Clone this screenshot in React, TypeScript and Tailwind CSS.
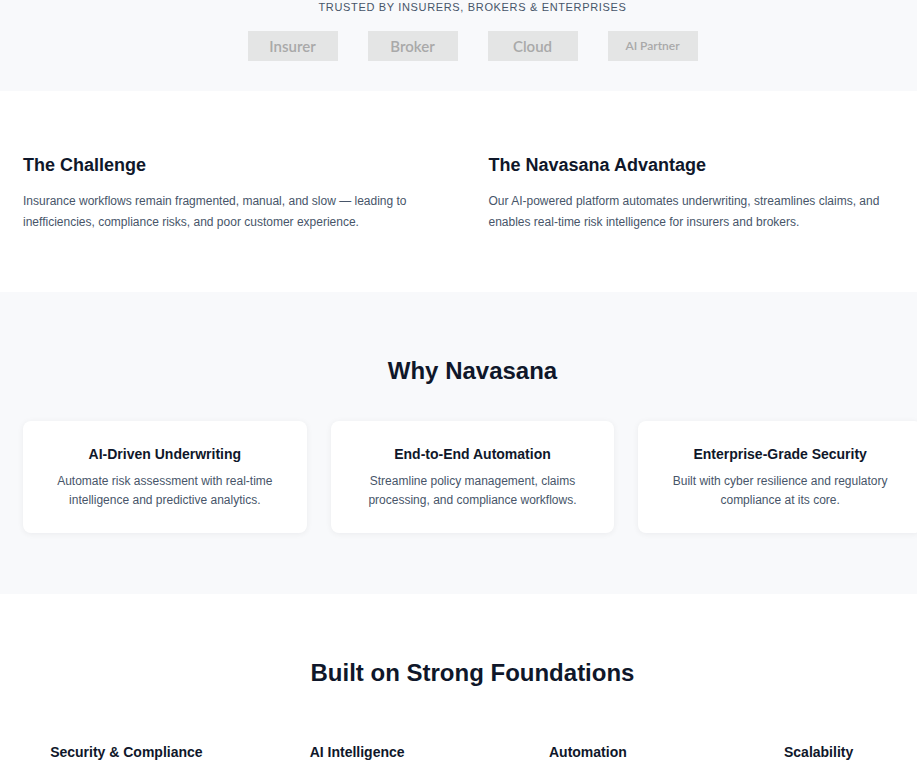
const LOGOS = [
  { name: 'Insurer', size: 'text-[15px]' },
  { name: 'Broker', size: 'text-[15px]' },
  { name: 'Cloud', size: 'text-[15px]' },
  { name: 'AI Partner', size: 'text-[12px]' }];

const WHY = [
  {
    title: 'AI-Driven Underwriting',
    body: 'Automate risk assessment with real-time intelligence and predictive analytics.'
  },
  {
    title: 'End-to-End Automation',
    body: 'Streamline policy management, claims processing, and compliance workflows.'
  },
  {
    title: 'Enterprise-Grade Security',
    body: 'Built with cyber resilience and regulatory compliance at its core.'
  }];

const PILLARS = ['Security & Compliance', 'AI Intelligence', 'Automation', 'Scalability'];

export default function App() {
  return (
    <div className="w-[945px] bg-white font-['Liberation_Sans',Arial,sans-serif] text-[#0f172a]">
      {/* trusted by */}
      <section className="bg-[#f8f9fb] pb-[30px]">
        <div className="flex flex-col items-center">
          <p className="text-[11px] leading-[14px] tracking-[0.06em] text-[#475569] uppercase">
            Trusted by insurers, brokers &amp; enterprises
          </p>
          <div className="mt-[17px] flex gap-[30px]">
            {LOGOS.map((l) =>
            <div
              key={l.name}
              className={`flex h-[30px] w-[90px] items-center justify-center bg-[#e4e5e5] font-['Lato',sans-serif] font-semibold text-[#a9a9a9] ${l.size}`}>
              
                {l.name}
              </div>
            )}
          </div>
        </div>
      </section>

      {/* challenge / advantage */}
      <section className="px-[23px] pt-[62px] pb-[59px]">
        <div className="grid grid-cols-2 gap-8">
          <div>
            <h3 className="text-[18px] leading-6 font-bold">The Challenge</h3>
            <p className="mt-[14px] text-[12px] leading-[21px] text-[#475569]">
              Insurance workflows remain fragmented, manual, and slow — leading to
              inefficiencies, compliance risks, and poor customer experience.
            </p>
          </div>
          <div>
            <h3 className="text-[18px] leading-6 font-bold">The Navasana Advantage</h3>
            <p className="mt-[14px] text-[12px] leading-[21px] text-[#475569]">
              Our AI-powered platform automates underwriting, streamlines claims, and
              enables real-time risk intelligence for insurers and brokers.
            </p>
          </div>
        </div>
      </section>

      {/* why */}
      <section className="bg-[#f8f9fb] px-[23px] pt-[63px] pb-[61px]">
        <h2 className="text-center text-[24px] leading-8 font-bold">Why Navasana</h2>
        <div className="mt-[34px] grid grid-cols-3 gap-6">
          {WHY.map((w) =>
          <div
            key={w.title}
            className="rounded-lg bg-white px-6 py-[23px] text-center shadow-[0_1px_6px_rgba(15,23,42,0.06)]">
            
              <h4 className="text-[14px] leading-5 font-bold">{w.title}</h4>
              <p className="mt-2 text-[12px] leading-[19px] text-[#475569]">{w.body}</p>
            </div>
          )}
        </div>
      </section>

      {/* foundations */}
      <section className="px-[23px] pt-[63px] pb-16">
        <h2 className="text-center text-[24px] leading-8 font-bold">Built on Strong Foundations</h2>
        <div className="mt-[53px] grid grid-cols-4 gap-6">
          {PILLARS.map((p) =>
          <h4 key={p} className="text-center text-[14px] leading-5 font-bold">
              {p}
            </h4>
          )}
        </div>
      </section>
    </div>);

}
